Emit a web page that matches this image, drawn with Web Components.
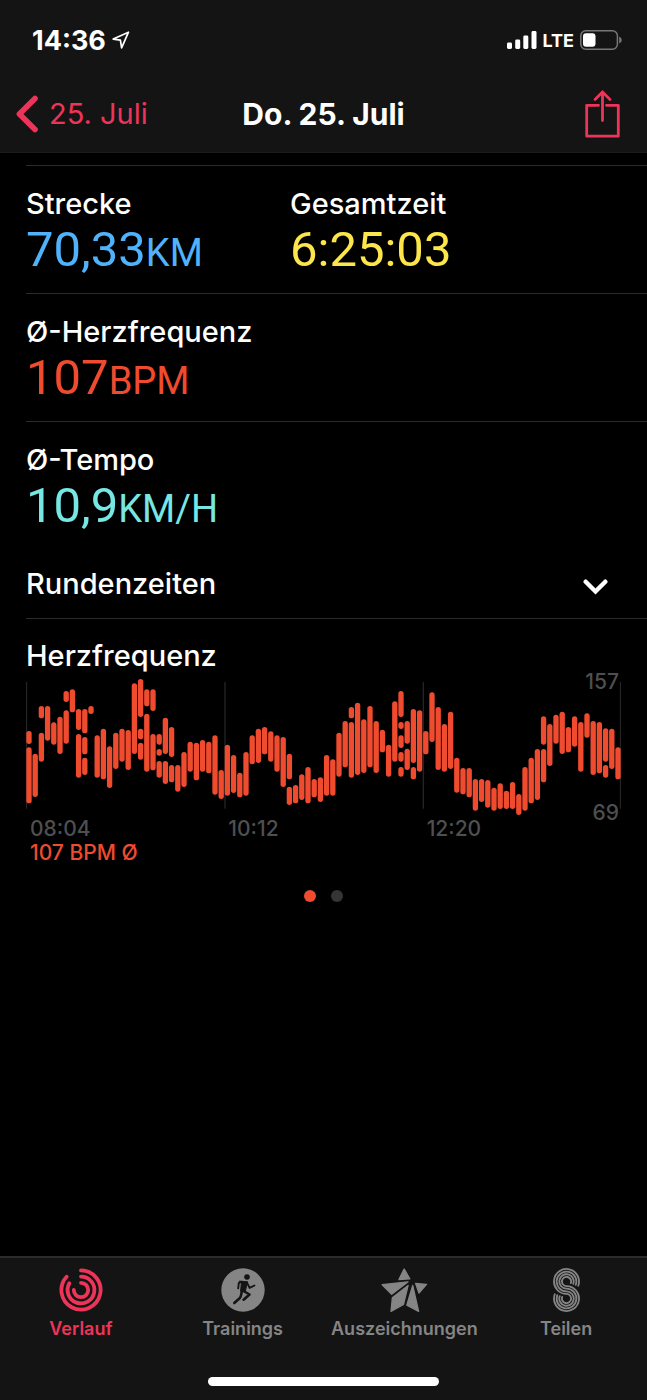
<!DOCTYPE html>
<html lang="de">
<head>
<meta charset="utf-8">
<meta name="viewport" content="width=device-width, initial-scale=1">
<title>Do. 25. Juli</title>
<style>
  :root {
    --bar: #141414;
    --line: #2a2a2b;
    --pink: #ee3459;
    --red: #ef4b2f;
    --grey: #858585;
  }
  body {
    margin: 0;
    min-height: 100vh;
    display: flex;
    flex-direction: column;
    background: #000;
    color: #fff;
    font-family: Inter, "Liberation Sans", sans-serif;
  }
  main {
    flex: 1;
    padding-top: 12px;
  }
  .row {
    display: grid;
    grid-template-columns: 264px 1fr;
    margin-left: 26px;
    border-top: 1px solid var(--line);
  }
</style>
</head>
<body>
<header>
  <status-bar time="14:36" network="LTE"></status-bar>
  <nav-bar back="25. Juli">Do. 25. Juli</nav-bar>
</header>
<main>
  <div class="row">
    <workout-metric label="Strecke" unit="KM" style="color:#4fb2fa">70,33</workout-metric>
    <workout-metric label="Gesamtzeit" style="color:#fde64b">6:25:03</workout-metric>
  </div>
  <div class="row">
    <workout-metric label="Ø-Herzfrequenz" unit="BPM" style="color:#ef4b2f">107</workout-metric>
  </div>
  <div class="row">
    <workout-metric label="Ø-Tempo" unit="KM/H" style="color:#76e7e3">10,9</workout-metric>
  </div>
  <expand-row>Rundenzeiten</expand-row>
  <heart-chart max="157" min="69" times="08:04,10:12,12:20">
    Herzfrequenz
    <span slot="average">107 BPM Ø</span>
  </heart-chart>
  <page-dots count="2"></page-dots>
</main>
<tab-bar>
  <tab-item icon="rings" active>Verlauf</tab-item>
  <tab-item icon="runner">Trainings</tab-item>
  <tab-item icon="star">Auszeichnungen</tab-item>
  <tab-item icon="sharing">Teilen</tab-item>
</tab-bar>

<script>
// Small helper, every element gets an open root with its own markup
class BaseElement extends HTMLElement {
  constructor() {
    super()
    this.attachShadow({mode: 'open'})
  }
  connectedCallback() {
    this.shadowRoot.innerHTML = this.render()
  }
  attr(name) {
    return this.getAttribute(name) || ''
  }
}

class StatusBar extends BaseElement {
  render() {
    return `<style>
      :host { display: flex; justify-content: space-between; align-items: center;
        height: 80px; padding: 0 25px 0 32px; background: var(--bar); }
      div { display: flex; align-items: center; }
      .time { gap: 6px; font-size: 27px; font-weight: 700; }
      .right { gap: 6px; font-size: 18px; font-weight: 700; }
      svg { display: block; }
    </style>
    <div class="time"><span>${this.attr('time')}</span>
      <svg width="18" height="18" viewBox="0 0 18 18" fill="none" stroke="#fff" stroke-width="1.7" stroke-linejoin="round"><path d="M16.5 1.2 1.2 8.1 8.4 9.2 9.6 16.8Z"/></svg>
    </div>
    <div class="right">
      <svg width="30" height="18" viewBox="0 0 30 18" fill="#fff"><rect y="11.5" width="5" height="6.5" rx="1.4"/><rect x="8.2" y="8.5" width="5" height="9.5" rx="1.4"/><rect x="16.3" y="4.5" width="5" height="13.5" rx="1.4"/><rect x="24.5" width="5" height="18" rx="1.4"/></svg>
      <span>${this.attr('network')}</span>
      <svg width="42" height="20" viewBox="0 0 42 20"><rect x=".8" y=".8" width="36.6" height="18.4" rx="5" fill="none" stroke="#777" stroke-width="1.5"/><rect x="3" y="3.2" width="12.5" height="13.6" rx="3" fill="#fff"/><path d="M39.2 6.5q2.6 1 2.6 3.5t-2.6 3.5Z" fill="#777"/></svg>
    </div>`
  }
}

class NavBar extends BaseElement {
  render() {
    return `<style>
      :host { display: grid; grid-template-columns: 1fr auto 1fr; align-items: center;
        height: 68px; padding: 0 27px 4px 16px; background: var(--bar); border-bottom: 1px solid #1b1b1b; }
      a { display: flex; align-items: center; gap: 11px; color: var(--pink);
        font-size: 29px; line-height: 34px; text-decoration: none; }
      h1 { margin: 0; font-size: 30px; line-height: 34px; font-weight: 700; padding-left: 11px; }
      button { justify-self: end; padding: 0; border: 0; background: none; color: var(--pink); }
      svg { display: block; }
    </style>
    <a href="#"><svg width="22" height="38" viewBox="0 0 22 38" fill="none" stroke="currentColor" stroke-width="5.6" stroke-linecap="round" stroke-linejoin="round"><path d="M19 3.5 3.4 19 19 34.5"/></svg>${this.attr('back')}</a>
    <h1><slot></slot></h1>
    <button aria-label="Teilen"><svg width="35" height="48" viewBox="0 0 35 48" fill="none" stroke="currentColor" stroke-width="2.8"><path d="M13.5 15.3H1.7V46.2H33.3V15.3H21.5" stroke-linejoin="round" stroke-linecap="round"/><path d="M17.5 30.5V2.5M10 9.5 17.5 2 25 9.5" stroke-linecap="round"/></svg></button>`
  }
}

class WorkoutMetric extends BaseElement {
  render() {
    return `<style>
      :host { display: block; padding: 21px 0 14px; }
      .label { color: #fff; font-size: 29px; line-height: 34px; font-weight: 500; }
      .value { font: 49px/58px Roboto, sans-serif; }
      .unit { font-size: 38px; line-height: 38px; }
    </style>
    <div class="label">${this.attr('label')}</div>
    <div class="value"><slot></slot><span class="unit">${this.attr('unit')}</span></div>`
  }
}

class ExpandRow extends BaseElement {
  render() {
    return `<style>
      :host { display: block; margin-left: 26px; border-bottom: 1px solid var(--line); }
      button { display: flex; width: 100%; justify-content: space-between; align-items: center;
        padding: 18px 39px 17px 0; border: 0; background: none; color: #fff;
        font: 500 29px/34px Inter, sans-serif; text-align: left; }
      svg { margin-top: 6px; }
    </style>
    <button aria-expanded="false"><slot></slot>
      <svg width="25" height="16" viewBox="0 0 25 16" fill="none" stroke="#fff" stroke-width="4.4" stroke-linecap="round" stroke-linejoin="miter"><path d="M2.7 2.7 12.5 12.5 22.3 2.7"/></svg>
    </button>`
  }
}

// One entry per time slice: top, bottom pairs, three units per pixel
const BARS = [
  [213,252,262,430],[281,411],[138,175,218,305],[138,242],[187,254],[170,282],[93,126,151,251],[88,157],
  [147,210,222,353],[147,220,231,283,293,345],[138,162],[226,353],[206,358],[259,384],[218,327],[206,305],
  [210,330],[70,282],[57,171,206,238,248,299],[88,139,161,335],[88,153,222,331],[222,254,267,287,303,353],
  [173,282,303,372],[201,291,315,367],[315,395],[276,381],[245,335],[248,361],[240,335],[245,340],[226,404],
  [330,417],[254,407],[285,399],[338,412],[276,407],[226,313],[206,309],[201,283],[214,305],[226,335],
  [231,381],[281,358,380,435],[375,430],[343,420],[321,430],[357,412],[352,426],[285,407],[298,407],
  [218,350],[183,322],[141,175,186,353],[128,345],[178,339],[138,322],[183,339],[209,277],[254,350],
  [124,305],[93,171,186,207,226,264,276,305,321,350],[183,251,266,330],[147,309,321,358],[151,335],
  [213,283],[97,246],[141,330],[192,335],[155,327],[293,398],[324,403],[324,412],[357,452],[357,426],
  [360,443],[383,452],[370,447],[392,447],[366,447],[402,465],[321,452],[293,430],[267,420],
  [169,254,267,367],[192,318],[164,251],[155,282],[201,277],[169,260],[186,335],[160,233],[183,345],
  [186,340],[205,305,315,353],[206,327],[262,358]
]

class HeartChart extends BaseElement {
  bars() {
    let out = ''
    BARS.forEach((spans, i) => {
      const x = 1 + i * 18.6
      for (let s = 0; s < spans.length; s += 2) {
        out += `<rect x="${x.toFixed(1)}" y="${spans[s] - 57}" width="16" height="${spans[s + 1] - spans[s]}" rx="8"/>`
      }
    })
    return out
  }
  render() {
    const times = this.attr('times').split(',')
    return `<style>
      :host { display: block; padding: 20px 26px 0; }
      h2 { margin: 0 0 6px; font-size: 29px; line-height: 34px; font-weight: 500; }
      .plot { position: relative; }
      svg { display: block; width: 100%; }
      .limit, .times { color: #4f4f50; font-size: 21px; line-height: 24px; font-weight: 500; }
      .limit { position: absolute; right: 2px; }
      .max { top: -9px; }
      .min { bottom: -9px; }
      .times { display: grid; grid-template-columns: repeat(3, 1fr); margin-top: 1px; }
      .times span, .average { padding-left: 4px; }
      .average { color: var(--red); font-size: 21px; line-height: 24px; font-weight: 500; }
    </style>
    <h2><slot></slot></h2>
    <div class="plot">
      <svg viewBox="0 0 1785 411">
        <path d="M1.5 9V389M597 9V389M1192 9V389M1783.5 9V389" stroke="#242424" stroke-width="4"/>
        <g fill="#ef4b2f">${this.bars()}</g>
      </svg>
      <span class="limit max">${this.attr('max')}</span>
      <span class="limit min">${this.attr('min')}</span>
    </div>
    <div class="times">${times.map(t => `<span>${t}</span>`).join('')}</div>
    <div class="average"><slot name="average"></slot></div>`
  }
}

class PageDots extends BaseElement {
  render() {
    return `<style>
      :host { display: flex; justify-content: center; gap: 15px; padding: 25px 0; }
      i { width: 12px; height: 12px; border-radius: 50%; background: #353535; }
      i:first-of-type { background: var(--red); }
    </style>` + '<i></i>'.repeat(Number(this.attr('count')))
  }
}

const ICONS = {
  rings: `<svg width="44" height="44" viewBox="0 0 44 44" fill="none" stroke="currentColor" stroke-width="3.8" stroke-linecap="round">
    <path d="M22 2.4A19.6 19.6 0 1 1 7.6 8.7"/><path d="M22 8.6A13.4 13.4 0 1 1 10.4 15.3"/><path d="M22 14.8A7.2 7.2 0 1 1 14.8 22"/></svg>`,
  runner: `<svg width="44" height="44" viewBox="0 0 44 44" fill="none" stroke="#141414" stroke-linecap="round" stroke-linejoin="round">
    <circle cx="22" cy="22" r="21.7" fill="currentColor" stroke="none"/><circle cx="26" cy="9" r="2.8" fill="#141414" stroke="none"/>
    <path d="M18.7 13.2 26.5 13.8 24.3 23.4 19.6 23.2 20.4 15Z" fill="#141414" stroke-width="1"/>
    <path d="M26 14.6 28.6 19.9 33.4 17.5M21 13.7 17.8 15 17.2 20.3" stroke-width="1.9"/>
    <path d="M22.5 23 28.5 26.5 22.6 31.7M20.8 23.2Q20 29.5 18.3 30.6L13.3 35" stroke-width="2.6"/></svg>`,
  star: `<svg width="49" height="46" viewBox="0 0 146 140" fill="currentColor" stroke="currentColor" stroke-width="4" stroke-linejoin="round">
    <path d="M72 6 89 36 56 38ZM5 54 84 45 34 83ZM107 50 140 53 117 79ZM84 56 70 114 32 135 36 94ZM98 56 116 135 80 116Z"/></svg>`,
  sharing: `<svg width="29" height="46" viewBox="-44 -70 88 140" fill="none" stroke="currentColor" stroke-width="5.6" stroke-linecap="round">
    <path d="M35.7-13A38 38 0 1 0 0 12A14 14 0 1 1-13.2 21.2"/><path d="M28.2-15.8A30 30 0 1 0 0 4A22 22 0 1 1-20.7 18.5"/>
    <path d="M20.7-18.5A22 22 0 1 0 0-4A30 30 0 1 1-28.2 15.8"/><path d="M13.2-21.2A14 14 0 1 0 0-12A38 38 0 1 1-35.7 13"/></svg>`
}

class TabBar extends BaseElement {
  render() {
    return `<style>
      :host { display: block; padding-bottom: 14px; background: var(--bar); border-top: 2px solid #2b2b2b; }
      nav { display: grid; grid-template-columns: repeat(4, 1fr); }
      .home { width: 231px; height: 9px; margin: 37px auto 0; border-radius: 5px; background: #fff; }
    </style>
    <nav><slot></slot></nav>
    <div class="home"></div>`
  }
}

class TabItem extends BaseElement {
  render() {
    return `<style>
      :host { display: block; color: var(--grey); }
      :host([active]) { color: var(--pink); }
      a { display: flex; flex-direction: column; align-items: center; gap: 6px; padding-top: 10px;
        color: inherit; font-size: 18px; line-height: 22px; font-weight: 600; text-decoration: none; }
      .icon { display: flex; height: 44px; align-items: center; }
    </style>
    <a href="#"><span class="icon">${ICONS[this.attr('icon')]}</span><slot></slot></a>`
  }
}

customElements.define('status-bar', StatusBar)
customElements.define('nav-bar', NavBar)
customElements.define('workout-metric', WorkoutMetric)
customElements.define('expand-row', ExpandRow)
customElements.define('heart-chart', HeartChart)
customElements.define('page-dots', PageDots)
customElements.define('tab-bar', TabBar)
customElements.define('tab-item', TabItem)
</script>
</body>
</html>
